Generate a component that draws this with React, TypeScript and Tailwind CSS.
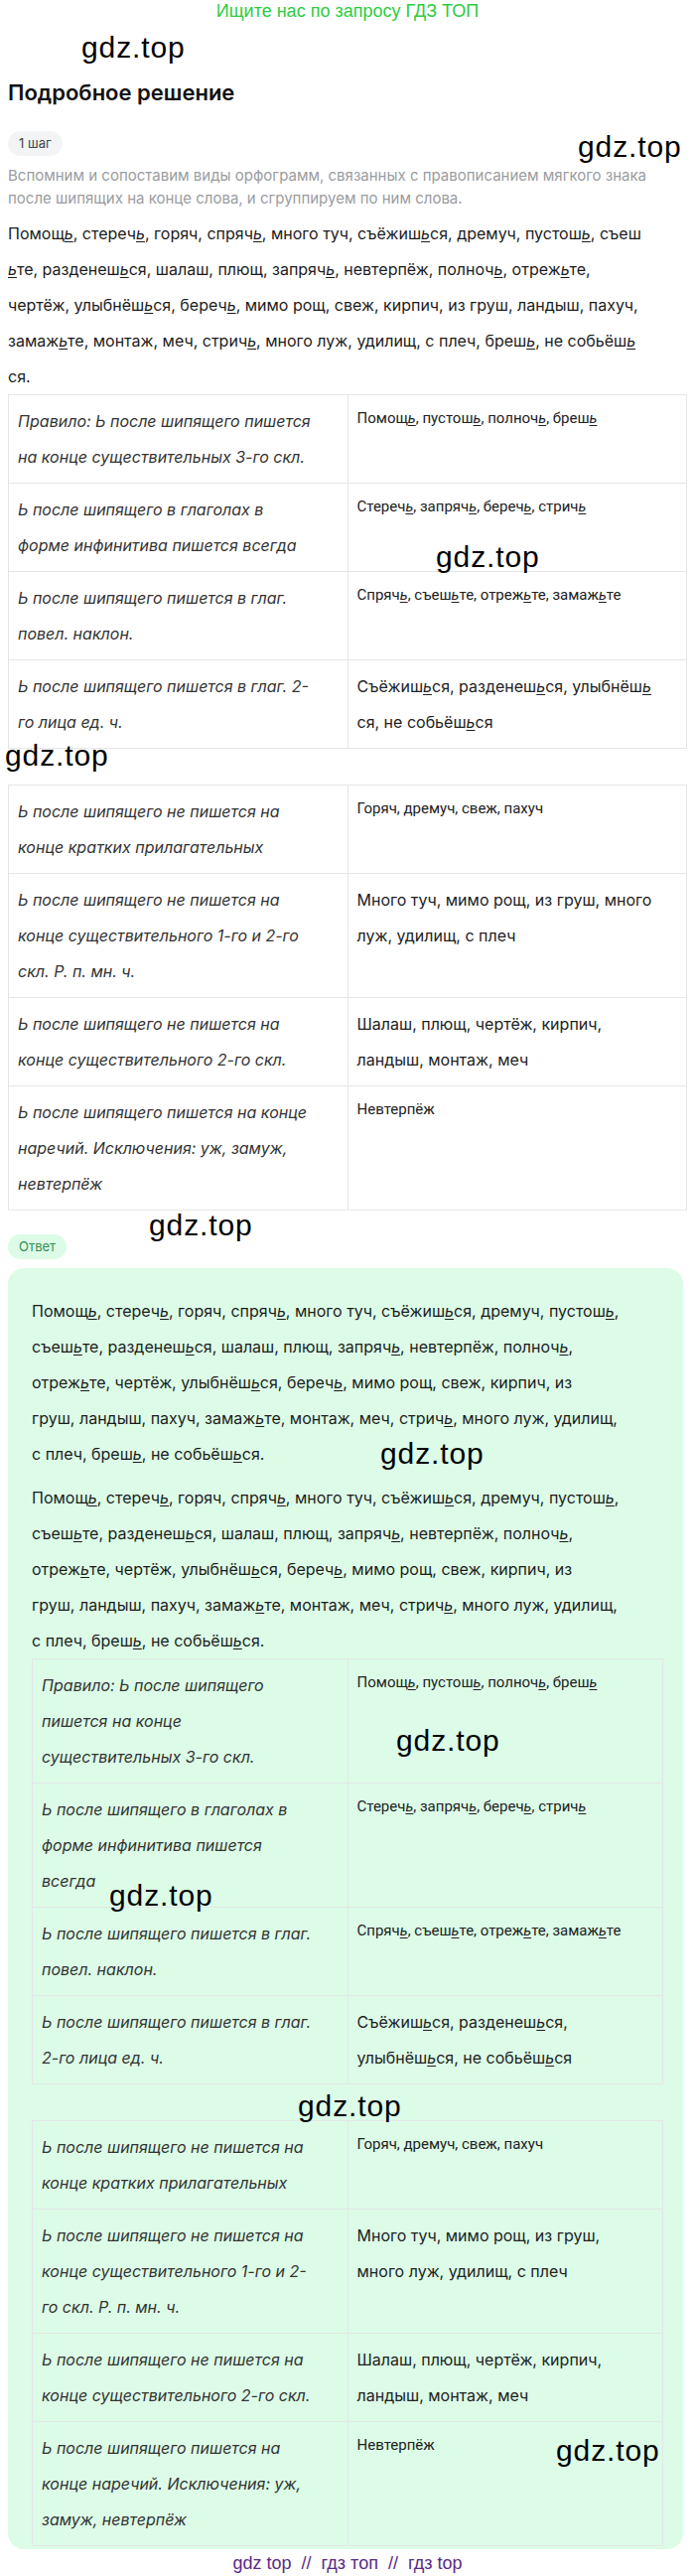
import React from 'react';

type Row = { l: string[]; r: string[]; s?: boolean };

const tableA: Row[] = [
  { l: ['Правило: Ь после шипящего пишется', 'на конце существительных 3-го скл.'], r: ['Помощь, пустошь, полночь, брешь'], s: true },
  { l: ['Ь после шипящего в глаголах в', 'форме инфинитива пишется всегда'], r: ['Стеречь, запрячь, беречь, стричь'], s: true },
  { l: ['Ь после шипящего пишется в глаг.', 'повел. наклон.'], r: ['Спрячь, съешьте, отрежьте, замажьте'], s: true },
  { l: ['Ь после шипящего пишется в глаг. 2-', 'го лица ед. ч.'], r: ['Съёжишься, разденешься, улыбнёшь', 'ся, не собьёшься'] },
];

const tableB: Row[] = [
  { l: ['Ь после шипящего не пишется на', 'конце кратких прилагательных'], r: ['Горяч, дремуч, свеж, пахуч'], s: true },
  { l: ['Ь после шипящего не пишется на', 'конце существительного 1-го и 2-го', 'скл. Р. п. мн. ч.'], r: ['Много туч, мимо рощ, из груш, много', 'луж, удилищ, с плеч'] },
  { l: ['Ь после шипящего не пишется на', 'конце существительного 2-го скл.'], r: ['Шалаш, плющ, чертёж, кирпич,', 'ландыш, монтаж, меч'] },
  { l: ['Ь после шипящего пишется на конце', 'наречий. Исключения: уж, замуж,', 'невтерпёж'], r: ['Невтерпёж'], s: true },
];

const tableC: Row[] = [
  { l: ['Правило: Ь после шипящего', 'пишется на конце', 'существительных 3-го скл.'], r: ['Помощь, пустошь, полночь, брешь'], s: true },
  { l: ['Ь после шипящего в глаголах в', 'форме инфинитива пишется', 'всегда'], r: ['Стеречь, запрячь, беречь, стричь'], s: true },
  { l: ['Ь после шипящего пишется в глаг.', 'повел. наклон.'], r: ['Спрячь, съешьте, отрежьте, замажьте'], s: true },
  { l: ['Ь после шипящего пишется в глаг.', '2-го лица ед. ч.'], r: ['Съёжишься, разденешься,', 'улыбнёшься, не собьёшься'] },
];

const tableD: Row[] = [
  { l: ['Ь после шипящего не пишется на', 'конце кратких прилагательных'], r: ['Горяч, дремуч, свеж, пахуч'], s: true },
  { l: ['Ь после шипящего не пишется на', 'конце существительного 1-го и 2-', 'го скл. Р. п. мн. ч.'], r: ['Много туч, мимо рощ, из груш,', 'много луж, удилищ, с плеч'] },
  { l: ['Ь после шипящего не пишется на', 'конце существительного 2-го скл.'], r: ['Шалаш, плющ, чертёж, кирпич,', 'ландыш, монтаж, меч'] },
  { l: ['Ь после шипящего пишется на', 'конце наречий. Исключения: уж,', 'замуж, невтерпёж'], r: ['Невтерпёж'], s: true },
];

const topLines = [
  'Помощь, стеречь, горяч, спрячь, много туч, съёжишься, дремуч, пустошь, съеш',
  'ьте, разденешься, шалаш, плющ, запрячь, невтерпёж, полночь, отрежьте,',
  'чертёж, улыбнёшься, беречь, мимо рощ, свеж, кирпич, из груш, ландыш, пахуч,',
  'замажьте, монтаж, меч, стричь, много луж, удилищ, с плеч, брешь, не собьёшь',
  'ся.',
];

const answerLines = [
  'Помощь, стеречь, горяч, спрячь, много туч, съёжишься, дремуч, пустошь,',
  'съешьте, разденешься, шалаш, плющ, запрячь, невтерпёж, полночь,',
  'отрежьте, чертёж, улыбнёшься, беречь, мимо рощ, свеж, кирпич, из',
  'груш, ландыш, пахуч, замажьте, монтаж, меч, стричь, много луж, удилищ,',
  'с плеч, брешь, не собьёшься.',
];

// ь после шипящих подчёркиваем
function Soft({ text }: { text: string }) {
  const parts = text.split(/(?<=[шщчжШЩЧЖ])ь|^ь/);
  return (
    <>
      {parts.map((p, i) => (
        <React.Fragment key={i}>
          {i > 0 && <u className="italic underline-offset-2">ь</u>}
          {p}
        </React.Fragment>
      ))}
    </>
  );
}

function Lines({ lines }: { lines: string[] }) {
  return (
    <>
      {lines.map((t, i) => (
        <span key={i} className="block whitespace-nowrap">
          <Soft text={t} />
        </span>
      ))}
    </>
  );
}

function RuleTable({ rows }: { rows: Row[] }) {
  return (
    <table className="w-full table-fixed border-collapse">
      <tbody>
        {rows.map((row, i) => (
          <tr key={i}>
            <td className="w-1/2 border border-[#e4e6e8] px-[9px] py-[8px] align-top text-[16px] leading-[36px] italic text-[#333]">
              {row.l.map((t, j) => (
                <span key={j} className="block whitespace-nowrap">{t}</span>
              ))}
            </td>
            <td className="w-1/2 border border-[#e4e6e8] px-[9px] py-[8px] align-top text-[#222]">
              {row.s ? (
                <div className="font-['Roboto',sans-serif] text-[15px] leading-[30px]">
                  <Lines lines={row.r} />
                </div>
              ) : (
                <div className="text-[16px] leading-[36px]">
                  <Lines lines={row.r} />
                </div>
              )}
            </td>
          </tr>
        ))}
      </tbody>
    </table>
  );
}

function Mark({ className }: { className: string }) {
  return (
    <span
      className={`pointer-events-none absolute font-['Liberation_Sans',Arial,sans-serif] text-[30px] leading-none tracking-[0.03em] text-black ${className}`}
    >
      gdz.top
    </span>
  );
}

export default function App() {
  return (
    <div className="relative w-[700px] bg-white font-['Inter','Noto_Sans',sans-serif] text-[#1c1c1c]">
      <p className="text-center font-['Liberation_Sans',Arial,sans-serif] text-[18px] leading-[22px] text-[#2ecc40]">
        Ищите нас по запросу ГДЗ ТОП
      </p>

      <div className="px-2">
        <h2 className="mt-[57px] text-[22px] font-semibold leading-[28px] text-[#111]">Подробное решение</h2>

        <div className="mt-[25px] flex">
          <span className="flex h-[25px] items-center rounded-full bg-[#f3f4f6] px-[11px] text-[13px] text-[#444]">1 шаг</span>
        </div>

        <p className="mt-[8px] text-[15px] leading-[23px] text-[#9a9ca0]">
          Вспомним и сопоставим виды орфограмм, связанных с правописанием мягкого знака
          <br />
          после шипящих на конце слова, и сгруппируем по ним слова.
        </p>

        <p className="mt-[6px] text-[16px] leading-[36px]">
          <Lines lines={topLines} />
        </p>

        <RuleTable rows={tableA} />
        <div className="h-[36px]" />
        <RuleTable rows={tableB} />

        <div className="mt-[24px] flex">
          <span className="flex h-[25px] items-center rounded-full bg-[#dcfce7] px-[11px] text-[13px] text-[#2f8f55]">Ответ</span>
        </div>

        <div className="mr-1 mt-[9px] rounded-[16px] bg-[#dcfce7] pb-[3px] pl-6 pr-5 pt-[25px]">
          <p className="text-[16px] leading-[36px]">
            <Lines lines={answerLines} />
          </p>
          <p className="mt-[8px] text-[16px] leading-[36px]">
            <Lines lines={answerLines} />
          </p>
          <RuleTable rows={tableC} />
          <div className="h-[36px]" />
          <RuleTable rows={tableD} />
        </div>
      </div>

      <div className="flex h-[27px] items-center justify-center whitespace-pre font-['Liberation_Sans',Arial,sans-serif] text-[18px] leading-none text-[#5b2a86]">
        gdz top  //  гдз топ  //  гдз top
      </div>

      <Mark className="left-[82px] top-[33px]" />
      <Mark className="left-[582px] top-[133px]" />
      <Mark className="left-[439px] top-[546px]" />
      <Mark className="left-[5px] top-[746px]" />
      <Mark className="left-[150px] top-[1219px]" />
      <Mark className="left-[383px] top-[1449px]" />
      <Mark className="left-[399px] top-[1738px]" />
      <Mark className="left-[110px] top-[1894px]" />
      <Mark className="left-[300px] top-[2106px]" />
      <Mark className="left-[560px] top-[2453px]" />
    </div>
  );
}
